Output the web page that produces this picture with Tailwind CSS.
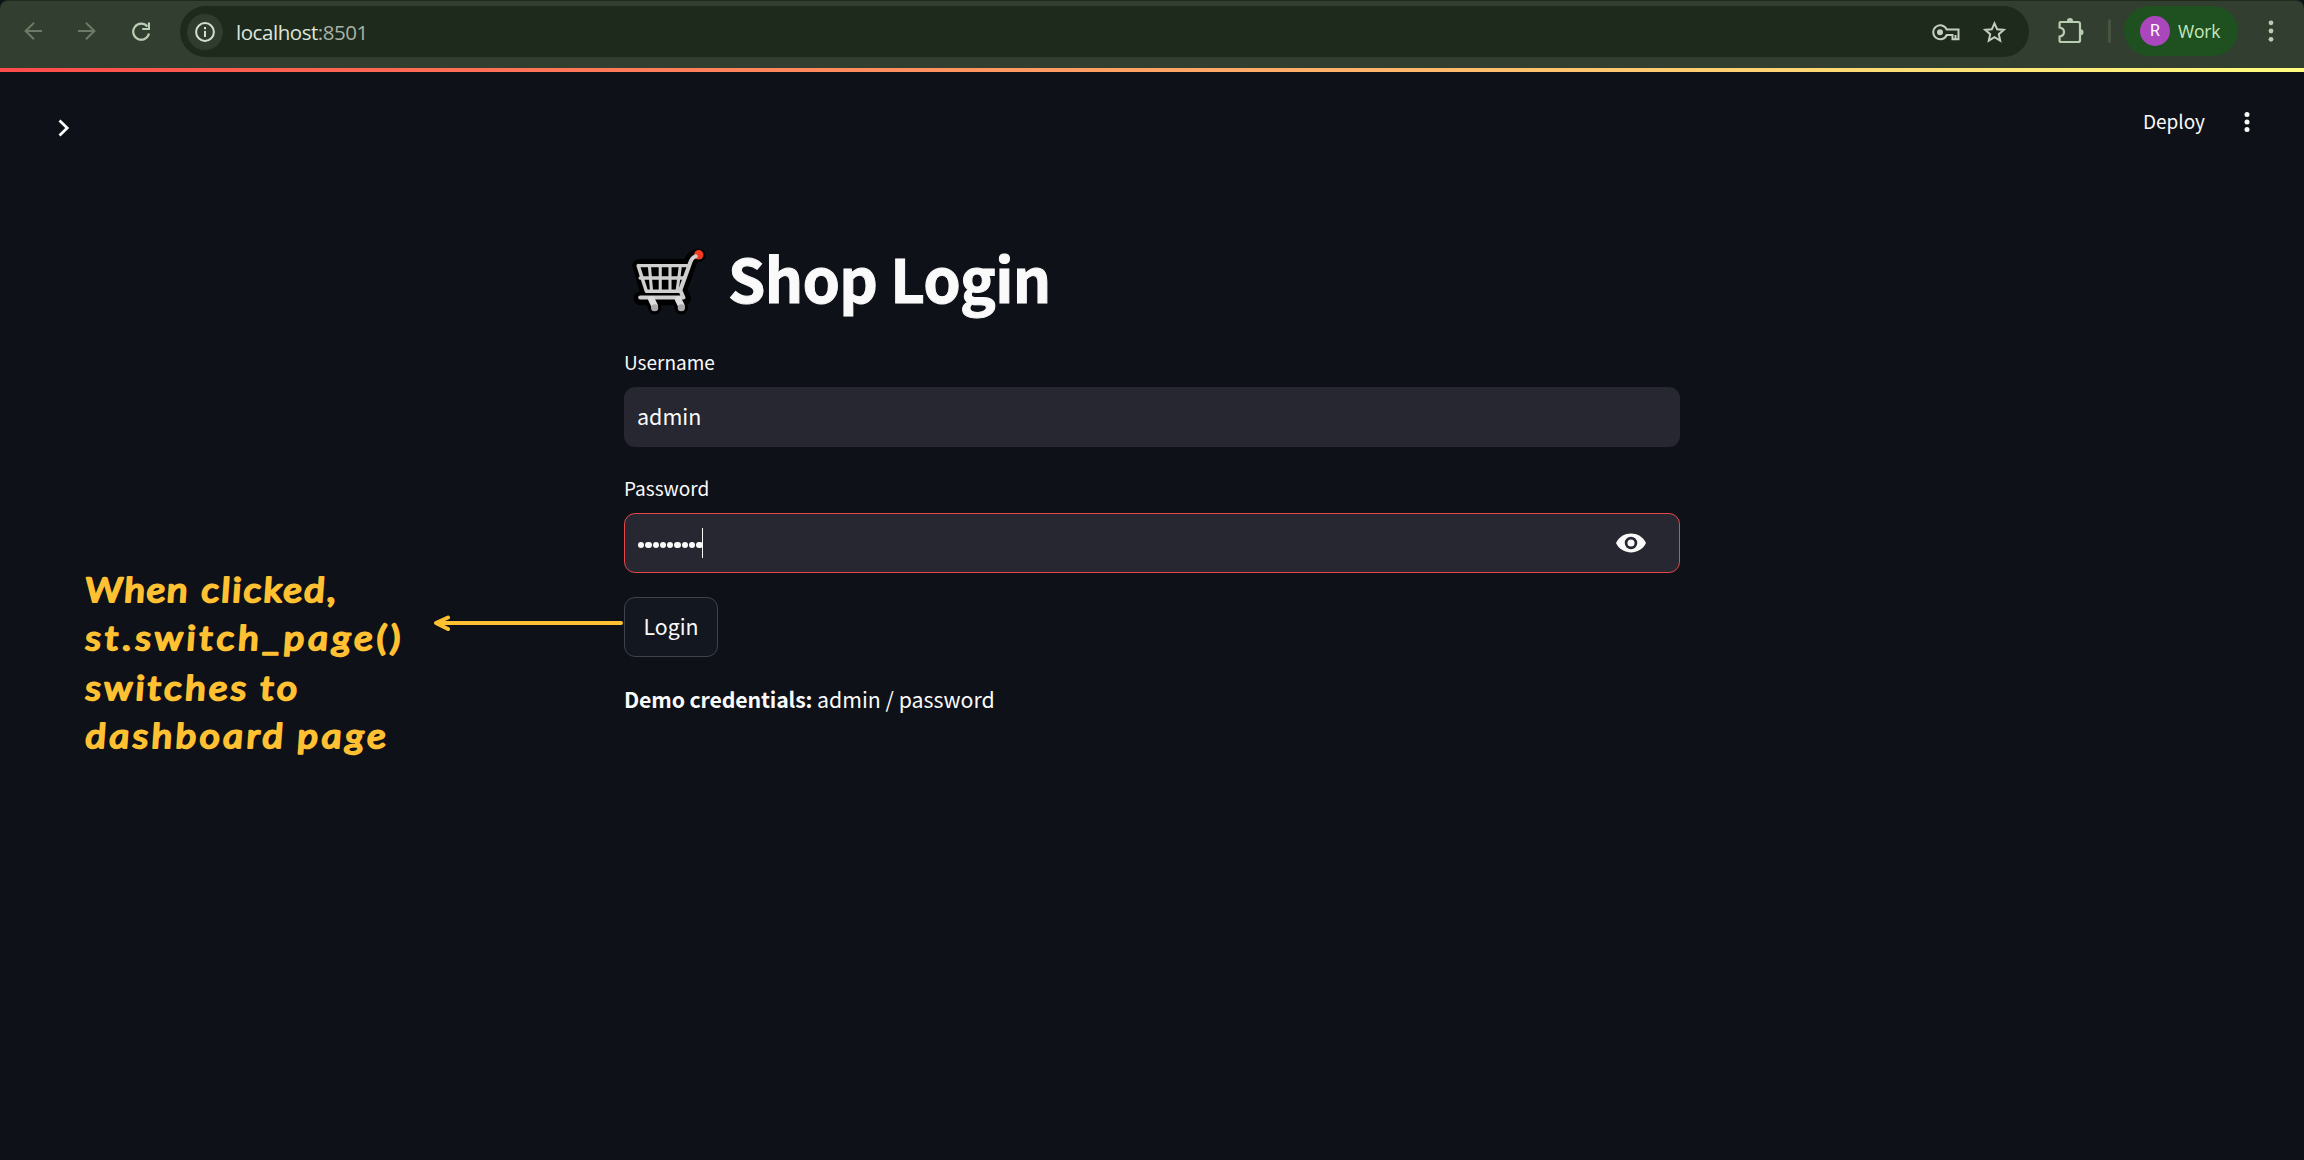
<!DOCTYPE html>
<html lang="en">
<head>
<meta charset="utf-8">
<title>Shop Login</title>
<script src="https://cdn.jsdelivr.net/npm/@tailwindcss/browser@4"></script>
</head>
<body class="relative flex h-[1160px] w-[2304px] flex-col overflow-hidden bg-[#0e1117] font-['Noto_Sans_CJK_SC',sans-serif] text-[#fafafa]">

<!-- browser toolbar -->
<header class="flex h-[68px] shrink-0 items-start rounded-t-lg border-t border-[#1f2b1e] bg-[#323e2f] pt-[5px]">
  <div class="flex h-[50px] w-[180px] items-center pl-[24px]">
    <svg class="h-[18px] w-[18px]" viewBox="0 0 18 18" fill="none" stroke="#6c7b67" stroke-width="2"><path d="M18 9H1.500M10 .8 1.600 9 10 17.200"/></svg>
    <svg class="ml-[36px] h-[18px] w-[18px]" viewBox="0 0 18 18" fill="none" stroke="#6c7b67" stroke-width="2"><path d="M0 9h16.500M8 .8 16.400 9 8 17.200"/></svg>
    <svg class="ml-[36px] h-[19px] w-[18px]" viewBox="0 0 18 19" fill="none" stroke="#b9ceb1" stroke-width="2.200"><path d="M15.300 4.500A8 8 0 1 0 17 11.500M17 .5V7h-6.800"/></svg>
  </div>
  <div class="flex h-[51px] w-[1849px] items-center rounded-full bg-[#1e2a1b] pl-[7px] pr-[23px]">
    <div class="flex h-[36px] w-[36px] items-center justify-center rounded-full bg-[#303c2d]">
      <svg class="h-[20px] w-[20px]" viewBox="0 0 20 20" fill="none" stroke="#d5ddd1" stroke-width="2"><circle cx="10" cy="10" r="8.900"/><path d="M10 9v6M10 5v2.200"/></svg>
    </div>
    <span class="ml-[13px] mt-[2px] font-['Open_Sans',sans-serif] text-[20.500px] leading-none tracking-[-0.45px] text-[#dfe5dc]">localhost<span class="text-[#a9b3a5]">:8501</span></span>
    <svg class="ml-auto mt-[2px] h-[17px] w-[28px]" viewBox="0 0 28 17" fill="none" stroke="#c5cdc1" stroke-width="2"><path d="M14.700 5.500A7 7 0 1 0 14.700 11H20.500V15.300H26.500V5.500Z"/><path d="M23.500 15v-4"/><circle cx="8" cy="8.300" r="3" fill="#c5cdc1" stroke="none"/></svg>
    <svg class="ml-[23px] h-[22px] w-[23px]" viewBox="0 0 23 22" fill="none" stroke="#c5cdc1" stroke-width="2"><path d="m11.500 2.300 2.700 6 6.500.6-4.900 4.300 1.400 6.400-5.700-3.400-5.700 3.400 1.400-6.400-4.900-4.300 6.500-.6Z"/></svg>
  </div>
  <div class="flex h-[50px] flex-1 items-center">
    <svg class="ml-[29px] h-[26px] w-[26px]" viewBox="0 0 26 26" fill="none" stroke="#b9ceb1" stroke-width="2.200"><path d="M2.500 4H20Q22 4 22 6V22.500Q22 24 20 24H2.500Q1.600 24 1.600 23V18.500C7.500 17.500 7.500 10.500 1.600 9.500V5Q1.600 4 2.500 4Z"/><path d="M9 3a3 3 0 0 1 6 0ZM22.500 11.200a3 3 0 0 1 0 6Z" fill="#b9ceb1" stroke="none"/></svg>
    <div class="ml-[24px] h-[24px] w-[3px] rounded-full bg-[#455540]"></div>
    <div class="ml-[13px] flex h-[50px] w-[114px] items-center rounded-full bg-[#1f5120] pl-[16px]">
      <div class="flex h-[30px] w-[30px] items-center justify-center rounded-full bg-[#ab47bc] font-['Roboto',sans-serif] text-[16px] leading-none">R</div>
      <span class="ml-[8px] mt-px font-['Open_Sans',sans-serif] text-[17.500px] leading-none tracking-[-0.2px] text-[#c5e7bd]">Work</span>
    </div>
    <svg class="ml-[30px] h-[22px] w-[6px]" viewBox="0 0 6 22" fill="#b9ceb1"><circle cx="3" cy="2.800" r="2.400"/><circle cx="3" cy="11" r="2.400"/><circle cx="3" cy="19.300" r="2.400"/></svg>
  </div>
</header>
<div class="h-[4px] shrink-0 bg-linear-to-r/srgb from-[#ff4b4b] to-[#fffd80]"></div>

<!-- app bar -->
<div class="flex h-[100px] shrink-0 items-center pl-[58px] pr-[54px]">
  <svg class="mt-[11px] h-[18px] w-[12px]" viewBox="0 0 12 18" fill="none" stroke="#fafafa" stroke-width="2.800"><path d="m1.500 1.500 7.700 7.500-7.700 7.500"/></svg>
  <span class="mb-[3px] ml-auto text-[19px] leading-none">Deploy</span>
  <svg class="ml-[39px] h-[20px] w-[6px]" viewBox="0 0 6 20" fill="#fafafa"><circle cx="3" cy="2.500" r="2.500"/><circle cx="3" cy="10" r="2.500"/><circle cx="3" cy="17.500" r="2.500"/></svg>
</div>

<!-- login form -->
<main class="mx-auto flex w-[1056px] flex-col items-start pt-[66px]">
  <h1 class="flex h-[84px] w-full items-center text-[60px] font-bold leading-none tracking-[-0.7px]">
    <svg class="ml-[8px] mr-[20px] h-[76px] w-[76px] shrink-0" viewBox="0 0 74 74" fill="none" stroke-linecap="round" stroke-linejoin="round">
      <g stroke="#000" stroke-width="13"><path d="M65 13Q58 14 56 22L47 46 51 55H8" /><path d="M7 23H55L47 47H14Z" fill="#000"/><path d="M20 57l2 7M46 57l2 7"/></g>
      <circle cx="65" cy="12.500" r="4.600" fill="#f23b22"/>
      <g stroke="#cfcfcf" stroke-width="4"><path d="M62 14Q58 15 56 22L47 47 50 54H8"/><path d="M6 23H55M6 23 14 48H47M8 35H51" stroke-width="3.400"/><path d="M17 24 19 47M27.500 24V47M37 24V47M47 24 44 47" stroke-width="3"/></g>
      <path d="m19 56 3 6M45 56l3 6" stroke="#ddd" stroke-width="6.500"/>
      <path d="M22 64h.1M48 64h.1" stroke="#aaa" stroke-width="7"/>
    </svg>
    <span class="-mt-[6px] [-webkit-text-stroke:1px_#fafafa]">Shop Login</span>
  </h1>
  <label class="mt-[26px] flex h-[26px] items-center text-[19px] leading-none">Username</label>
  <div class="mt-[13px] flex h-[60px] w-full items-center rounded-[11px] bg-[#262730] pb-[2px] pl-[13px] text-[21.500px] leading-none">admin</div>
  <label class="mt-[27px] flex h-[26px] items-center text-[19px] leading-none">Password</label>
  <div class="mt-[13px] flex h-[60px] w-full items-center rounded-[11px] border border-[#e34748] bg-[#262730] pl-[13px] pr-[33px]">
    <div class="mt-[4px] flex gap-[1px]">
      <i class="size-[6.300px] rounded-full bg-[#fafafa]"></i><i class="size-[6.300px] rounded-full bg-[#fafafa]"></i><i class="size-[6.300px] rounded-full bg-[#fafafa]"></i><i class="size-[6.300px] rounded-full bg-[#fafafa]"></i><i class="size-[6.300px] rounded-full bg-[#fafafa]"></i><i class="size-[6.300px] rounded-full bg-[#fafafa]"></i><i class="size-[6.300px] rounded-full bg-[#fafafa]"></i><i class="size-[6.300px] rounded-full bg-[#fafafa]"></i><i class="size-[6.300px] rounded-full bg-[#fafafa]"></i>
    </div>
    <div class="-ml-[1px] h-[30px] w-px bg-[#fafafa]"></div>
    <svg class="ml-auto h-[20px] w-[30px]" viewBox="0 0 30 20"><path d="M0 10C6-2.600 24-2.600 30 10 24 22.600 6 22.600 0 10Z" fill="#fafafa"/><circle cx="15" cy="10" r="4.900" fill="#fafafa" stroke="#262730" stroke-width="2.700"/></svg>
  </div>
  <button class="mt-[24px] flex h-[60px] w-[94px] items-center justify-center rounded-[11px] border border-[#41434b] bg-[#131720] pb-[2px] text-[21.300px] leading-none">Login</button>
  <p class="mt-[28px] flex h-[28px] items-center whitespace-pre text-[21.300px] leading-none"><strong class="font-bold tracking-[-0.15px]">Demo credentials:</strong> admin / password</p>
</main>

<!-- annotation -->
<svg class="absolute left-[70px] top-[560px] h-[210px] w-[560px]" viewBox="0 0 560 210">
  <path d="M551 63H367M378 57.500 366 63 378 69" fill="none" stroke="#ffc132" stroke-width="4" stroke-linecap="round" stroke-linejoin="round"/>
  <g class="font-['Lato',sans-serif] text-[34px] italic" fill="#ffc132" stroke="#ffc132" stroke-width="2" stroke-linecap="round" stroke-linejoin="round">
    <text transform="translate(16 42) skewX(4) scale(1.15 1)" textLength="89">When</text>
    <text transform="translate(132 42) skewX(4) scale(1.15 1)" textLength="117">clicked,</text>
    <text transform="translate(16 90) skewX(4) scale(1.15 1)" textLength="274">st.switch_page()</text>
    <text transform="translate(16 140) skewX(4) scale(1.15 1)" textLength="140">switches</text>
    <text transform="translate(191 140) skewX(4) scale(1.15 1)" textLength="32">to</text>
    <text transform="translate(16 188) skewX(4) scale(1.15 1)" textLength="172">dashboard</text>
    <text transform="translate(228 188) skewX(4) scale(1.15 1)" textLength="77">page</text>
  </g>
</svg>
</body>
</html>
